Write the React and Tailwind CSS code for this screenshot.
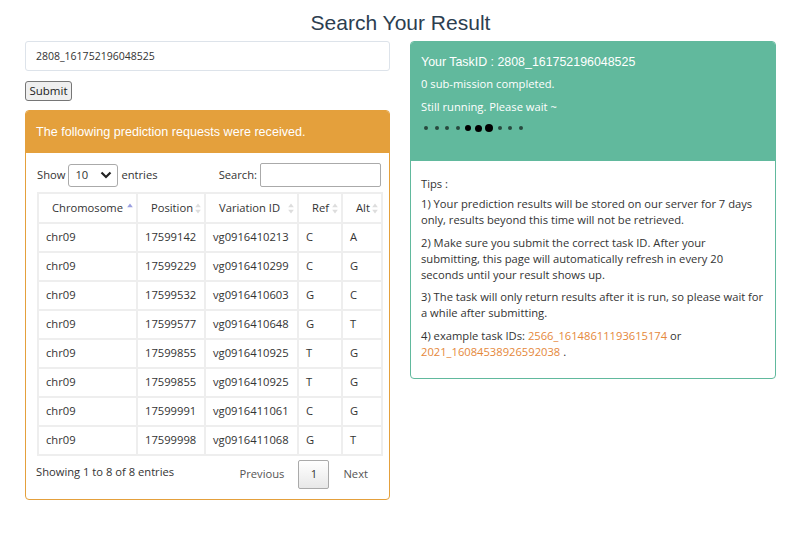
import React from 'react';

const rows = [
  ['chr09', '17599142', 'vg0916410213', 'C', 'A'],
  ['chr09', '17599229', 'vg0916410299', 'C', 'G'],
  ['chr09', '17599532', 'vg0916410603', 'G', 'C'],
  ['chr09', '17599577', 'vg0916410648', 'G', 'T'],
  ['chr09', '17599855', 'vg0916410925', 'T', 'G'],
  ['chr09', '17599855', 'vg0916410925', 'T', 'G'],
  ['chr09', '17599991', 'vg0916411061', 'C', 'G'],
  ['chr09', '17599998', 'vg0916411068', 'G', 'T'],
];

const columns = [
  { label: 'Chromosome', w: 'w-[99px]', active: true },
  { label: 'Position', w: 'w-[68px]' },
  { label: 'Variation ID', w: 'w-[93px]' },
  { label: 'Ref', w: 'w-[44px]' },
  { label: 'Alt', w: 'w-[40px]' },
];

function SortIcon({ active }) {
  return (
    <svg width="6" height="11" viewBox="0 0 6 11" className="absolute right-[3px] top-[9px]">
      <path d="M3 0.5 L5.8 4.3 H0.2 Z" fill={active ? '#9a9fe0' : '#dddddd'} />
      {!active && <path d="M3 10.5 L5.8 6.7 H0.2 Z" fill="#dddddd" />}
    </svg>
  );
}

// loading dots: small faded ones, three growing black ones in the middle
const dots = [
  'w-[4px] h-[4px] bg-black/60',
  'w-[4px] h-[4px] bg-black/60',
  'w-[4px] h-[4px] bg-black/60',
  'w-[4px] h-[4px] bg-black/60',
  'w-[6px] h-[6px] bg-black',
  'w-[7px] h-[7px] bg-black',
  'w-[8px] h-[8px] bg-black',
  'w-[4px] h-[4px] bg-black/60',
  'w-[4px] h-[4px] bg-black/60',
  'w-[4px] h-[4px] bg-black/60',
];

export default function App() {
  return (
    <div className="min-h-screen bg-white font-['Open_Sans',sans-serif] text-[#333] pt-[8px]">
      <div className="ml-[25px] w-[751px]">
        <h1 className="text-center font-['Liberation_Sans',Arial,sans-serif] text-[21px] leading-[30px] text-[#2c3e50]">
          Search Your Result
        </h1>

        <div className="mt-[3px] grid grid-cols-[365px_366px] gap-x-[20px] items-start">
          {/* Left column */}
          <div>
            <input
              type="text"
              defaultValue="2808_161752196048525"
              className="block w-full h-[30px] border border-[#dde3ea] rounded-[3px] px-[10px] text-[10.5px] text-[#333] outline-none"
            />
            <button className="mt-[10px] h-[20px] w-[47px] bg-[#efefef] border border-[#767676] rounded-[3px] text-[11.5px] leading-[16px] text-[#222] font-['Open_Sans',sans-serif]">
              Submit
            </button>

            <div className="mt-[9px] border border-[#e4a03c] rounded-[4px] overflow-hidden">
              <div className="h-[42px] bg-[#e4a03c] px-[10px] flex items-center text-white text-[12.6px] font-['Liberation_Sans',Arial,sans-serif]">
                The following prediction requests were received.
              </div>
              <div className="pl-[11px] pr-[8px] pt-[10px] pb-[10px] text-[11.2px]">
                <div className="flex items-center justify-between h-[24px]">
                  <div className="flex items-center gap-[3px]">
                    <span>Show</span>
                    <div className="w-[50px] h-[23px] border border-[#aaa] rounded-[3px] flex items-center justify-between pl-[6px] pr-[5px]">
                      <span>10</span>
                      <svg width="12" height="8" viewBox="0 0 12 8">
                        <path d="M1.5 1.5 L6 6 L10.5 1.5" stroke="#222" strokeWidth="2.2" fill="none" />
                      </svg>
                    </div>
                    <span>entries</span>
                  </div>
                  <div className="flex items-center gap-[3px]">
                    <span>Search:</span>
                    <input type="text" className="w-[121px] h-[24px] border border-[#aaa] rounded-[2px] outline-none" />
                  </div>
                </div>

                <table className="mt-[5px] w-[344px] border-collapse table-fixed">
                  <thead>
                    <tr>
                      {columns.map((c) => (
                        <th
                          key={c.label}
                          className={`${c.w} relative h-[30px] border-[2px] border-[#eeeeee] border-b-black border-b-[1px] font-normal text-left pl-[13px] whitespace-nowrap`}
                        >
                          {c.label}
                          <SortIcon active={c.active} />
                        </th>
                      ))}
                    </tr>
                  </thead>
                  <tbody>
                    {rows.map((r, i) => (
                      <tr key={i} className={i === rows.length - 1 ? 'border-b border-black' : ''}>
                        {r.map((v, j) => (
                          <td key={j} className="h-[29px] border-[2px] border-[#eeeeee] pl-[7px] whitespace-nowrap">
                            {v}
                          </td>
                        ))}
                      </tr>
                    ))}
                  </tbody>
                </table>

                <div className="flex items-center justify-between mt-[4px]">
                  <span className="-ml-[1px] -mt-[4px]">Showing 1 to 8 of 8 entries</span>
                  <div className="flex items-center text-[#555]">
                    <span className="px-[8px]">Previous</span>
                    <span className="w-[31px] h-[29px] border border-[#aaa] rounded-[2px] bg-gradient-to-b from-white to-[#e8e8e8] flex items-center justify-center text-[#333] mx-[6px]">
                      1
                    </span>
                    <span className="pl-[8px] pr-[13px]">Next</span>
                  </div>
                </div>
              </div>
            </div>
          </div>

          {/* Right column */}
          <div className="border border-[#61b99d] rounded-[4px] overflow-hidden">
            <div className="h-[119px] bg-[#61b99d] px-[10px] pt-[12px] text-white">
              <div className="text-[12.4px] leading-[16px] font-['Liberation_Sans',Arial,sans-serif]">
                Your TaskID : 2808_161752196048525
              </div>
              <div className="mt-[5px] text-[11.2px] leading-[17px]">0 sub-mission completed.</div>
              <div className="mt-[6px] text-[11.2px] leading-[17px]">Still running. Please wait ~</div>
              <div className="mt-[8px] flex items-center h-[10px]">
                {dots.map((d, i) => (
                  <div key={i} className="w-[10.5px] flex justify-center">
                    <span className={`${d} rounded-full block`} />
                  </div>
                ))}
              </div>
            </div>
            <div className="px-[10px] pt-[15px] pb-[18px] text-[11.2px] leading-[16px] text-[#333]">
              <p className="mb-[4px]">Tips :</p>
              <p className="mb-[7px]">
                1) Your prediction results will be stored on our server for 7 days only, results beyond this time will not be retrieved.
              </p>
              <p className="mb-[6px]">
                2) Make sure you submit the correct task ID. After your submitting, this page will automatically refresh in every 20 seconds until your result shows up.
              </p>
              <p className="mb-[7px]">
                3) The task will only return results after it is run, so please wait for a while after submitting.
              </p>
              <p>
                4) example task IDs: <span className="text-[#e5883a]">2566_16148611193615174</span> or{' '}
                <span className="text-[#e5883a]">2021_16084538926592038</span> .
              </p>
            </div>
          </div>
        </div>
      </div>
    </div>
  );
}
